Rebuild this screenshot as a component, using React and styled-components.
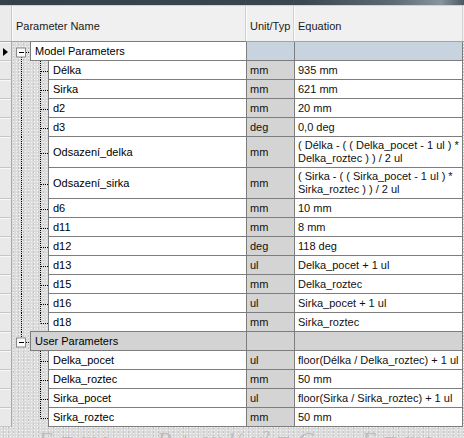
import React from 'react';
import styled, { createGlobalStyle } from 'styled-components';

const GlobalStyle = createGlobalStyle`
    body {
        margin: 0;
        font-family: "Liberation Sans", Arial, sans-serif;
        font-size: 11px;
        color: #000;
    }
`;

const ROW_H = 19;
const TALL_H = 31;

const Window = styled.div`
    width: 464px;
    height: 438px;
    overflow: hidden;
    display: flex;
    flex-direction: column;
    background-color: #dcdcdc;
    background-image:
        radial-gradient(#f6f6f6 0.7px, transparent 0.8px),
        radial-gradient(#bdbdbd 0.6px, transparent 0.7px);
    background-size: 3px 3px, 5px 4px;
    background-position: 0 0, 1px 2px;
`;

const TitleStrip = styled.div`
    height: 5px;
    flex-shrink: 0;
    background: linear-gradient(90deg, #35404a 0%, #3b4650 65%, #5d6b77 85%, #8795a1 95%, #4c5762 100%);
    border-bottom: 1px solid #cfd3d6;
`;

const GridRow = styled.div`
    display: grid;
    grid-template-columns: 12px 234px 48px 169px 1fr;
    height: ${p => p.$h}px;
    flex-shrink: 0;
`;

const HeaderRow = styled(GridRow)`
    background: #f0f0f0;
    border-bottom: 1px solid #a5a5a5;
    box-sizing: border-box;
`;

const HeaderCell = styled.div`
    display: flex;
    align-items: center;
    padding: 4px 0 0 4px;
    border-right: 1px solid #d2d2d2;
    box-shadow: inset 1px 0 0 #fbfbfb;
    white-space: nowrap;
    overflow: hidden;
    color: #1a1a1a;
`;

const Corner = styled.div`
    background: #ebebeb;
    border-right: 1px solid #c9c9c9;
`;

const RowHead = styled.div`
    background: #e9e9e9;
    border-right: 1px solid #a9a9a9;
    border-bottom: 1px solid #c6c6c6;
    box-shadow: inset 0 1px 0 #f8f8f8;
    display: flex;
    align-items: center;
    padding-left: 3px;
    box-sizing: border-box;
`;

const Marker = styled.span`
    width: 0;
    height: 0;
    border-top: 4.5px solid transparent;
    border-bottom: 4.5px solid transparent;
    border-left: 5px solid #000;
    margin-top: 2px;
`;

const NameCell = styled.div`
    display: flex;
    min-width: 0;
`;

const NameBox = styled.div`
    flex: 1;
    display: flex;
    align-items: center;
    padding-left: 4px;
    background: ${p => p.$bg};
    border-left: 1px solid #7d7d7d;
    border-bottom: 1px solid #7d7d7d;
    box-shadow: ${p => (p.$group ? '0 -1px 0 #7d7d7d' : 'none')};
    white-space: nowrap;
    overflow: hidden;
`;

const ValueCell = styled.div`
    display: flex;
    flex-direction: column;
    justify-content: center;
    padding-left: ${p => p.$pad}px;
    background: ${p => p.$bg};
    border-left: 1px solid #7d7d7d;
    border-bottom: 1px solid #7d7d7d;
    border-right: ${p => (p.$last ? '1px solid #7d7d7d' : 'none')};
    line-height: 13px;
    white-space: nowrap;
    overflow: hidden;
    color: #111;
`;

const Filler = styled.div``;

const BottomStrip = styled.div`
    flex: 1;
    display: flex;
    gap: 48px;
    padding: 1px 0 0 38px;
    overflow: hidden;
    font-family: "Liberation Serif", "Times New Roman", serif;
    font-style: italic;
    font-size: 24px;
    line-height: 1;
    color: #bdbdbd;
    white-space: nowrap;
`;

// dotted tree connectors drawn in the gutter in front of each name
const Gutter = ({ level, h, first, last, parentHasNext }) => {
    const w = level === 0 ? 18 : 36;
    const cy = Math.floor(h / 2) + 1.5;
    const dot = { stroke: '#000', strokeWidth: 1, strokeDasharray: '1 1', fill: 'none' };
    return (
        <svg width={w} height={h} style={{ flexShrink: 0, display: 'block' }}>
            {level === 0 ? (
                <>
                    {!first && <line x1="9.5" y1="0" x2="9.5" y2={cy - 4.5} {...dot} />}
                    {!last && <line x1="9.5" y1={cy + 4.5} x2="9.5" y2={h} {...dot} />}
                    <line x1="14" y1={cy} x2="18" y2={cy} {...dot} />
                    <rect x="4.5" y={cy - 4.5} width="9" height="9" fill="#fbfbfb" stroke="#8a8a8a" />
                    <line x1="7" y1={cy} x2="12" y2={cy} stroke="#000" strokeWidth="1" />
                </>
            ) : (
                <>
                    {parentHasNext && <line x1="9.5" y1="0" x2="9.5" y2={h} {...dot} />}
                    <line x1="28.5" y1="0" x2="28.5" y2={last ? cy : h} {...dot} />
                    <line x1="29" y1={cy} x2="36" y2={cy} {...dot} />
                </>
            )}
        </svg>
    );
};

const groups = [
    {
        name: 'Model Parameters',
        color: '#c7d4df',
        nameBg: '#ffffff',
        items: [
            ['Délka', 'mm', ['935 mm']],
            ['Sirka', 'mm', ['621 mm']],
            ['d2', 'mm', ['20 mm']],
            ['d3', 'deg', ['0,0 deg']],
            ['Odsazení_delka', 'mm', ['( Délka - ( ( Delka_pocet - 1 ul ) *', 'Delka_roztec ) ) / 2 ul']],
            ['Odsazení_sirka', 'mm', ['( Sirka - ( ( Sirka_pocet - 1 ul ) *', 'Sirka_roztec ) ) / 2 ul']],
            ['d6', 'mm', ['10 mm']],
            ['d11', 'mm', ['8 mm']],
            ['d12', 'deg', ['118 deg']],
            ['d13', 'ul', ['Delka_pocet + 1 ul']],
            ['d15', 'mm', ['Delka_roztec']],
            ['d16', 'ul', ['Sirka_pocet + 1 ul']],
            ['d18', 'mm', ['Sirka_roztec']],
        ],
    },
    {
        name: 'User Parameters',
        color: '#d3d3d3',
        nameBg: '#d3d3d3',
        items: [
            ['Delka_pocet', 'ul', ['floor(Délka / Delka_roztec) + 1 ul']],
            ['Delka_roztec', 'mm', ['50 mm']],
            ['Sirka_pocet', 'ul', ['floor(Sirka / Sirka_roztec) + 1 ul']],
            ['Sirka_roztec', 'mm', ['50 mm']],
        ],
    },
];

const App = () => {
    const rows = [];
    groups.forEach((g, gi) => {
        const hasNext = gi < groups.length - 1;
        rows.push(
            <GridRow key={g.name} $h={ROW_H}>
                <RowHead>{gi === 0 && <Marker />}</RowHead>
                <NameCell>
                    <Gutter level={0} h={ROW_H} first={gi === 0} last={!hasNext} />
                    <NameBox $bg={g.nameBg} $group>{g.name}</NameBox>
                </NameCell>
                <ValueCell $bg={g.color} $pad={3} />
                <ValueCell $bg={g.color} $pad={4} $last />
                <Filler />
            </GridRow>
        );
        g.items.forEach(([name, unit, eq], i) => {
            const h = eq.length > 1 ? TALL_H : ROW_H;
            rows.push(
                <GridRow key={name} $h={h}>
                    <RowHead />
                    <NameCell>
                        <Gutter level={1} h={h} last={i === g.items.length - 1} parentHasNext={hasNext} />
                        <NameBox $bg="#ffffff">{name}</NameBox>
                    </NameCell>
                    <ValueCell $bg="#d4d4d4" $pad={3}>{unit}</ValueCell>
                    <ValueCell $bg="#ffffff" $pad={3} $last>
                        {eq.map(line => <span key={line}>{line}</span>)}
                    </ValueCell>
                    <Filler />
                </GridRow>
            );
        });
    });

    return (
        <>
            <GlobalStyle />
            <Window>
                <TitleStrip />
                <HeaderRow $h={36}>
                    <Corner />
                    <HeaderCell>Parameter Name</HeaderCell>
                    <HeaderCell>Unit/Typ</HeaderCell>
                    <HeaderCell>Equation</HeaderCell>
                    <Filler />
                </HeaderRow>
                {rows}
                <BottomStrip>
                    <span>E = mc</span>
                    <span>P + ρx ½ v² = C</span>
                    <span>E = mc</span>
                </BottomStrip>
            </Window>
        </>
    );
};

export default App;
